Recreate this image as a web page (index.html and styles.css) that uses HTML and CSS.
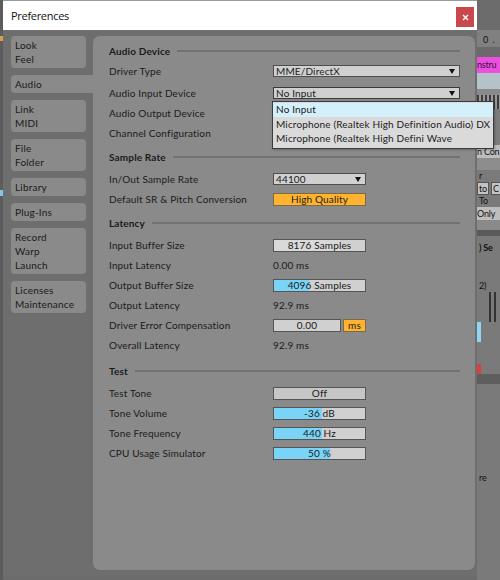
FILE: index.html
```html
<!DOCTYPE html>
<html>
<head>
<meta charset="utf-8">
<title>Preferences</title>
<link rel="stylesheet" href="styles.css">
</head>
<body>
<div class="desk">
  <div class="bg-left">
    <i class="bl bl-orange"></i>
    <i class="bl bl-blue"></i>
  </div>
  <div class="bg-right">
    <div class="br-top">0 .</div>
    <div class="br-gap1"></div>
    <div class="br-magenta">nstru</div>
    <div class="br-bluegray"></div>
    <div class="br-gap2"></div>
    <div class="br-bars"></div>
    <div class="br-gap3">m</div>
    <div class="br-light">n Con</div>
    <div class="br-gap4"></div>
    <div class="br-text">r</div>
    <div class="br-pair"><span>to</span><span>C</span></div>
    <div class="br-text">To</div>
    <div class="br-light">Only</div>
    <div class="br-band"></div>
    <div class="br-dark"></div>
    <div class="br-text br-se">) Se</div>
    <div class="br-space1"></div>
    <div class="br-text">2)</div>
    <div class="br-space2"></div>
    <div class="br-cyan"></div>
    <div class="br-space3"></div>
    <div class="br-red"></div>
    <div class="br-band2"></div>
    <div class="br-space4"></div>
    <div class="br-text">re</div>
  </div>

  <div class="window">
    <div class="titlebar">
      <span class="title">Preferences</span>
      <div class="close">
        <svg width="7" height="7" viewBox="0 0 7 7"><path d="M1 1L6 6M6 1L1 6" stroke="#fff" stroke-width="1.4" fill="none"/></svg>
      </div>
    </div>
    <div class="body">
      <nav class="tabs">
        <div class="tab">Look<br>Feel</div>
        <div class="tab active">Audio</div>
        <div class="tab">Link<br>MIDI</div>
        <div class="tab">File<br>Folder</div>
        <div class="tab">Library</div>
        <div class="tab">Plug-Ins</div>
        <div class="tab">Record<br>Warp<br>Launch</div>
        <div class="tab">Licenses<br>Maintenance</div>
      </nav>
      <main class="panel">
        <section class="section first">
          <div class="heading"><span>Audio Device</span><i class="rule"></i></div>
          <div class="row"><span class="label">Driver Type</span>
            <div class="select wide">MME/DirectX<i class="arrow"></i></div></div>
          <div class="row"><span class="label">Audio Input Device</span>
            <div class="select wide focus">No Input<i class="arrow"></i>
              <div class="popup">
                <div class="opt hl">No Input</div>
                <div class="opt">Microphone (Realtek High Definition Audio) DX</div>
                <div class="opt">Microphone (Realtek High Defini Wave</div>
              </div>
            </div></div>
          <div class="row"><span class="label">Audio Output Device</span></div>
          <div class="row"><span class="label">Channel Configuration</span></div>
        </section>

        <section class="section">
          <div class="heading"><span>Sample Rate</span><i class="rule"></i></div>
          <div class="row"><span class="label">In/Out Sample Rate</span>
            <div class="select">44100<i class="arrow"></i></div></div>
          <div class="row"><span class="label">Default SR &amp; Pitch Conversion</span>
            <div class="box orange">High Quality</div></div>
        </section>

        <section class="section">
          <div class="heading"><span>Latency</span><i class="rule"></i></div>
          <div class="row"><span class="label">Input Buffer Size</span>
            <div class="box"><i class="fill pale" style="width:72%"></i><span class="val">8176 Samples</span></div></div>
          <div class="row"><span class="label">Input Latency</span><span class="value">0.00 ms</span></div>
          <div class="row"><span class="label">Output Buffer Size</span>
            <div class="box"><i class="fill blue" style="width:38%"></i><span class="val">4096 Samples</span></div></div>
          <div class="row"><span class="label">Output Latency</span><span class="value">92.9 ms</span></div>
          <div class="row"><span class="label">Driver Error Compensation</span>
            <div class="box short"><span class="val">0.00</span></div><div class="box unit orange">ms</div></div>
          <div class="row"><span class="label">Overall Latency</span><span class="value">92.9 ms</span></div>
        </section>

        <section class="section test">
          <div class="heading"><span>Test</span><i class="rule"></i></div>
          <div class="row"><span class="label">Test Tone</span>
            <div class="box off"><span class="val">Off</span></div></div>
          <div class="row"><span class="label">Tone Volume</span>
            <div class="box"><i class="fill blue" style="width:53%"></i><span class="val">-36 dB</span></div></div>
          <div class="row"><span class="label">Tone Frequency</span>
            <div class="box"><i class="fill blue" style="width:53%"></i><span class="val">440 Hz</span></div></div>
          <div class="row"><span class="label">CPU Usage Simulator</span>
            <div class="box"><i class="fill blue" style="width:61%"></i><span class="val">50 %</span></div></div>
        </section>
      </main>
    </div>
  </div>
</div>
</body>
</html>
```

FILE: styles.css
```css
* { box-sizing: border-box; }
html, body { margin: 0; padding: 0; }
body {
  width: 500px;
  height: 580px;
  overflow: hidden;
  background: #6c6c6c;
  font-family: Lato, "Open Sans", sans-serif;
  color: #1a1a1a;
}
.desk { position: relative; width: 500px; height: 580px; }

/* background application (left sliver) */
.bg-left {
  position: absolute; left: 0; top: 0; width: 3px; height: 580px;
  background: #5c5c5c;
}
.bl { position: absolute; left: 0; width: 3px; display: block; }
.bl-orange { top: 36px; height: 5px; background: #d8a050; }
.bl-blue { top: 190px; height: 6px; background: #7fc9e8; }

/* background application (right sliver) */
.bg-right {
  position: absolute; left: 477px; top: 30px; width: 23px; height: 550px;
  background: #7a7a7a;
  display: flex; flex-direction: column;
  font-size: 9px; color: #111; overflow: hidden; white-space: nowrap;
  letter-spacing: -0.2px;
}
.br-top { height: 17px; background: #808080; padding: 4px 0 0 6px; letter-spacing: 1px; }
.br-gap1 { height: 10px; background: #6a6a6a; }
.br-magenta { height: 16px; background: #ea4fdd; padding: 2px 0 0 0; color: #3a1040; }
.br-bluegray { height: 16px; background: #b4c3c9; }
.br-gap2 { height: 6px; background: #8a8a8a; }
.br-bars { height: 14px; background: repeating-linear-gradient(90deg, #3c3c3c 0 2px, #9a9a9a 2px 4px); }
.br-gap3 { height: 36px; background: #7c7c7c; padding-top: 24px; }
.br-light { height: 13px; background: #bdbdbd; line-height: 13px; }
.br-gap4 { height: 12px; background: #8d8d8d; }
.br-text { height: 12px; line-height: 12px; padding-left: 2px; }
.br-pair { height: 13px; display: flex; gap: 2px; }
.br-pair span { background: #c4c4c4; border: 1px solid #555; line-height: 11px; padding: 0 1px; }
.br-band { height: 10px; background: #8a8a8a; }
.br-dark { height: 6px; background: #5a5a5a; }
.br-se { height: 24px; line-height: 24px; font-weight: 700; }
.br-space1 { height: 20px; }
.br-space2 { height: 30px; background: repeating-linear-gradient(90deg, #7a7a7a 0 12px, #333 12px 14px, #7a7a7a 14px 17px, #333 17px 19px); }
.br-cyan { height: 20px; width: 4px; background: #8fd6f2; }
.br-space3 { height: 22px; }
.br-red { height: 10px; width: 4px; background: #d84040; }
.br-band2 { height: 10px; background: #5e5e5e; }
.br-space4 { height: 88px; }

/* dialog window */
.window {
  position: absolute; left: 3px; top: 0;
  width: 474px; height: 577px;
  display: flex; flex-direction: column;
  background: #6e6e6e;
  border-top: 1px solid #9a9a9a;
}
.titlebar {
  height: 29px; flex: none;
  background: #ffffff;
  display: flex; align-items: center; justify-content: space-between;
  padding: 0 3px 0 8px;
}
.title {
  font-family: "Open Sans", "Noto Sans", sans-serif;
  font-size: 11px; letter-spacing: -0.3px; color: #111;
}
.close {
  width: 18px; height: 20px;
  background: #c9484d;
  display: flex; align-items: center; justify-content: center;
  margin-top: 3px;
}
.close svg { display: block; }

.body {
  flex: 1;
  display: flex;
  gap: 7px;
  padding: 6px 7px 7px 8px;
}

/* tabs */
.tabs {
  width: 75px; flex: none;
  display: flex; flex-direction: column;
  gap: 7px;
}
.tab {
  background: #8a8a8a;
  border-radius: 4px;
  padding: 2px 0 2px 4px;
  font-size: 10px;
  line-height: 14px;
  letter-spacing: 0.2px;
  color: #1a1a1a;
}
.tab.active {
  margin-right: -8px;
  border-radius: 4px 0 0 4px;
}

/* main panel */
.panel {
  flex: 1;
  background: #8a8a8a;
  border-radius: 7px;
  padding: 5px 15px 0 16px;
  font-size: 10px;
  letter-spacing: 0.15px;
}
.section + .section { margin-top: 4px; }
.section.test { margin-top: 6px; }
.heading {
  height: 20px;
  display: flex; align-items: center; gap: 7px;
  font-weight: 700;
  margin-bottom: 2px;
}
.section.first .heading { margin-bottom: 0; }
.section.first .row:nth-child(2) { height: 20px; margin-bottom: 2px; }
.rule { display: block; flex: 1; height: 2px; background: #727272; }
.row {
  height: 20px;
  display: flex; align-items: center;
}
.label { width: 164px; flex: none; white-space: nowrap; }

/* controls */
.select {
  position: relative;
  width: 93px; height: 12px;
  background: #d0d0d0;
  border: 1px solid #4e4e4e;
  line-height: 10px;
  padding-left: 2px;
  white-space: nowrap;
}
.select.wide { width: 187px; }
.select.focus { border-color: #3a3a3a; }
.arrow {
  position: absolute; right: 4px; top: 3px;
  width: 0; height: 0;
  border-left: 3.5px solid transparent;
  border-right: 3.5px solid transparent;
  border-top: 5px solid #111;
}
.popup {
  position: absolute; left: -2px; top: 13px;
  width: 222px;
  background: #dadada;
  border: 1px solid #3c3c3c;
  padding: 1px 0 2px;
  z-index: 5;
  box-shadow: 1px 1px 2px rgba(0,0,0,0.25);
}
.opt { height: 13.5px; line-height: 13.5px; padding-left: 3px; white-space: nowrap; }
.opt + .opt { margin-top: 1px; }
.opt.hl { background: #d4f0fb; }

.box {
  position: relative;
  width: 93px; height: 13px;
  background: #d0d0d0;
  border: 1px solid #555;
  text-align: center;
  line-height: 11px;
  white-space: nowrap;
}
.box.orange { background: #ffb32f; border-color: #7b6a48; }
.box.short { width: 68px; }
.box.unit { width: 23px; margin-left: 2px; }
.box.off { background: #c6c6c6; }
.fill { position: absolute; left: 0; top: 0; bottom: 0; display: block; }
.fill.blue { background: #7ad4f8; }
.fill.pale { background: #d9d9d9; }
.val { position: relative; }
```
